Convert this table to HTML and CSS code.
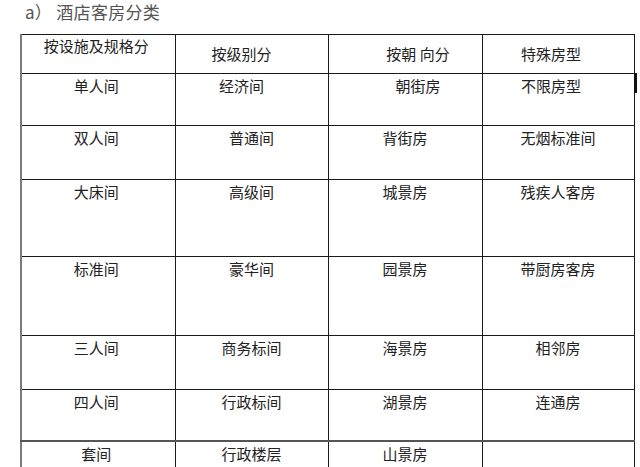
FILE: index.html
```html
<!DOCTYPE html>
<html lang="zh-CN">
<head>
<meta charset="utf-8">
<title>酒店客房分类</title>
<link rel="stylesheet" href="styles.css">
</head>
<body>
<div class="page">
  <h1 class="title">a）&nbsp;酒店客房分类</h1>
  <table class="grid">
    <colgroup>
      <col class="c1"><col class="c2"><col class="c3"><col class="c4">
    </colgroup>
    <tr class="h-head">
      <td class="top c-a">按设施及规格分</td>
      <td class="mid c-b sl">按级别分</td>
      <td class="mid sr">按朝 向分</td>
      <td class="mid sl2">特殊房型</td>
    </tr>
    <tr class="h1">
      <td class="c-a">单人间</td>
      <td class="sl">经济间</td>
      <td class="sr">朝街房</td>
      <td class="sl2 last"><span class="mark"></span>不限房型</td>
    </tr>
    <tr class="h2">
      <td class="c-a">双人间</td>
      <td>普通间</td>
      <td>背街房</td>
      <td>无烟标准间</td>
    </tr>
    <tr class="h3">
      <td class="c-a">大床间</td>
      <td>高级间</td>
      <td>城景房</td>
      <td>残疾人客房</td>
    </tr>
    <tr class="h4">
      <td class="c-a">标准间</td>
      <td>豪华间</td>
      <td>园景房</td>
      <td>带厨房客房</td>
    </tr>
    <tr class="h5">
      <td class="c-a">三人间</td>
      <td>商务标间</td>
      <td>海景房</td>
      <td>相邻房</td>
    </tr>
    <tr class="h6">
      <td class="c-a">四人间</td>
      <td>行政标间</td>
      <td>湖景房</td>
      <td>连通房</td>
    </tr>
    <tr class="h7">
      <td class="c-a">套间</td>
      <td>行政楼层</td>
      <td>山景房</td>
      <td></td>
    </tr>
  </table>
</div>
</body>
</html>
```

FILE: styles.css
```css
html, body {
  margin: 0;
  padding: 0;
  background: #ffffff;
  overflow: hidden;
}

.page {
  width: 640px;
  height: 467px;
  overflow: hidden;
  font-family: "Noto Sans CJK SC", "Noto Sans", sans-serif;
  color: #222;
}

.title {
  margin: 0;
  padding: 2px 0 0 25px;
  height: 34px;
  box-sizing: border-box;
  font-size: 17px;
  font-weight: normal;
  line-height: 20px;
  color: #555;
  letter-spacing: 0.3px;
}

.grid {
  margin-left: 20px;
  border-collapse: collapse;
  table-layout: fixed;
  width: 613px;
}

.c1 { width: 154px; }
.c2 { width: 153px; }
.c3 { width: 154px; }
.c4 { width: 152px; }

.grid td {
  border: 1px solid #1a1a1a;
  padding: 2px 0 0 0;
  font-size: 15px;
  line-height: 20px;
  text-align: center;
  vertical-align: top;
  color: #222;
}

.grid td.c-a {
  border-left: 2px solid #7a7a7a;
  padding-right: 4px;
}

.grid td.top { padding-top: 1px; }
.grid td.mid { vertical-align: middle; padding-top: 0; }

.grid td.sl { padding-right: 20px; }
.grid td.sr { padding-left: 26px; }
.grid td.sl2 { padding-right: 14px; }

.last { position: relative; }
.mark {
  position: absolute;
  right: -3px;
  top: -1px;
  width: 3px;
  height: 20px;
  background: #111;
}

.h-head td { height: 37px; }
.h1 td { height: 49px; }
.h2 td { height: 51px; }
.h3 td { height: 74px; }
.h4 td { height: 76px; }
.h5 td { height: 51px; }
.h6 td { height: 48px; border-bottom: 2px solid #555; }
.h7 td { height: 40px; }
```
